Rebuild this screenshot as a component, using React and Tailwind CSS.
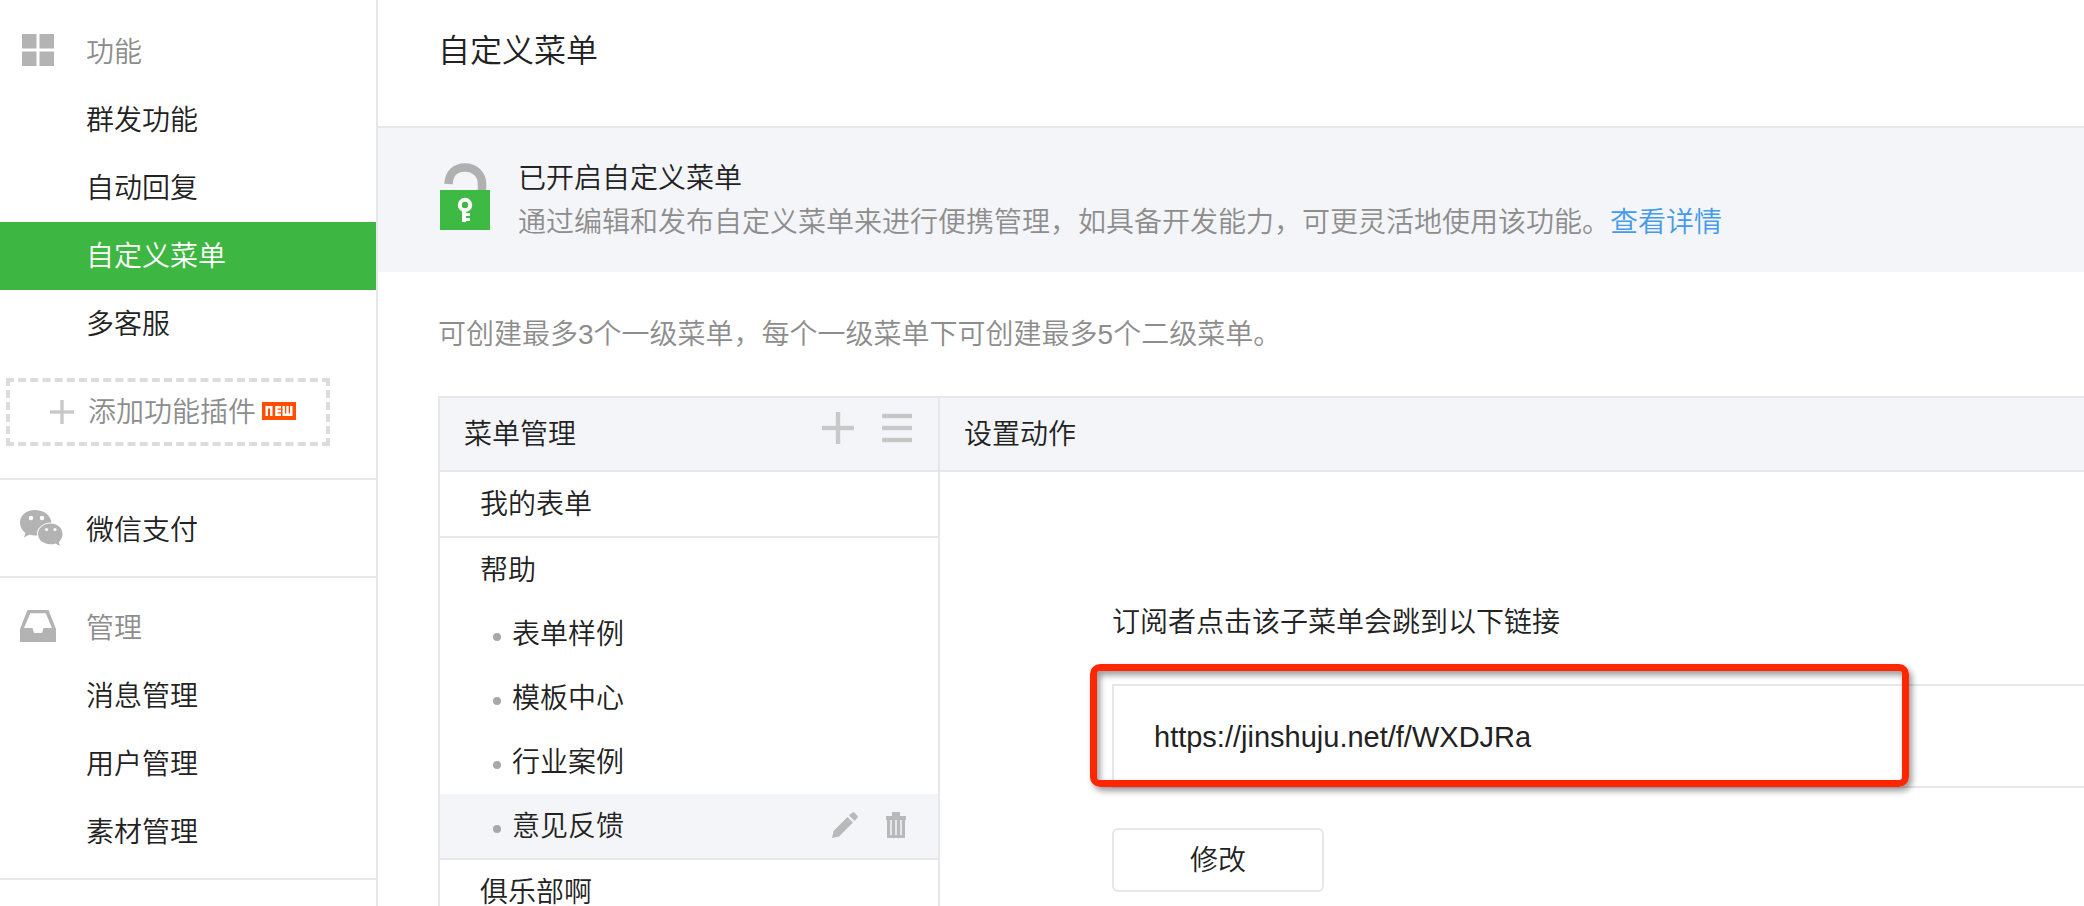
import React from "react";

const sideLink = "flex h-[68px] items-center pt-0.5 pl-[86px]";

function GridIcon() {
  return (
    <svg width="34" height="34" viewBox="0 0 34 34" fill="#b3b3b3" aria-hidden="true">
      <rect x="1" y="1" width="14.500" height="14.500" />
      <rect x="18.500" y="1" width="14.500" height="14.500" />
      <rect x="1" y="18.500" width="14.500" height="14.500" />
      <rect x="18.500" y="18.500" width="14.500" height="14.500" />
    </svg>
  );
}

function ChatIcon() {
  return (
    <svg width="44" height="38" viewBox="0 0 44 38" aria-hidden="true">
      <path
        fill="#b3b3b3"
        d="M15 1C6 1 0 6.500 0 13.500c0 4.500 2.200 8 5.500 10.500L4 28.500l5.500-3c2 .7 4 1 6.500 1h1c-1-7 5.500-13 14.500-13C30.500 6 24 1 15 1z"
      />
      <path
        fill="#b3b3b3"
        d="M30.500 14.500C23.500 14.500 18 19 18 25s5.500 10.300 12.500 10.300c1.800 0 3.400-.3 5-.9l4.500 2.700-1.200-4.200c2.400-2 3.700-4.900 3.700-7.900 0-6-5-10.500-12-10.500z"
      />
      <g fill="#fff">
        <circle cx="11" cy="9" r="2.200" />
        <circle cx="22" cy="9" r="2.200" />
        <circle cx="26.500" cy="20.500" r="1.600" />
        <circle cx="35" cy="20.500" r="1.600" />
      </g>
    </svg>
  );
}

function TrayIcon() {
  return (
    <svg width="36" height="34" viewBox="0 0 36 34" aria-hidden="true">
      <path
        fill="#b3b3b3"
        fillRule="evenodd"
        d="M7.500 1h21L36 20v13H0V20L7.500 1zm2.800 3.200L4 19h8.500l1.500 5h8l1.500-5H32L25.700 4.200H10.300z"
      />
    </svg>
  );
}

function PlusIcon({ size }) {
  return (
    <svg width={size} height={size} viewBox="0 0 32 32" fill="#c8c8c8" aria-hidden="true">
      <rect x="13.800" y="0" width="4.400" height="32" />
      <rect x="0" y="13.800" width="32" height="4.400" />
    </svg>
  );
}

function ListIcon() {
  return (
    <svg width="30" height="32" viewBox="0 0 30 32" fill="#c8c8c8" aria-hidden="true">
      <rect x="0" y="1.800" width="30" height="4.400" />
      <rect x="0" y="13.800" width="30" height="4.400" />
      <rect x="0" y="25.800" width="30" height="4.400" />
    </svg>
  );
}

function LockIcon() {
  return (
    <svg width="50" height="68" viewBox="0 0 50 68" aria-hidden="true">
      <path d="M8.500 21C9 10.500 15.500 4.500 25 4.500S42 11 42 21v7" fill="none" stroke="#b0b0b0" strokeWidth="8.500" />
      <rect x="0" y="27" width="50" height="40" fill="#3eb944" />
      <circle cx="25" cy="42" r="5.200" fill="none" stroke="#fff" strokeWidth="4" />
      <path d="M22 47h4v3h4v3h-4v2h4v3h-4v1h-4z" fill="#fff" />
    </svg>
  );
}

function PencilIcon() {
  return (
    <svg width="26" height="26" viewBox="0 0 26 26" fill="#b9b9b9" aria-hidden="true">
      <path d="M0 26l1.500-7L15.500 5l5.500 5.500L7 24.500z" />
      <path d="M17 3.500L20 .8c.8-.8 1.700-.8 2.500 0l2.700 2.700c.8.8.8 1.700 0 2.500L22.500 9z" />
    </svg>
  );
}

function TrashIcon() {
  return (
    <svg width="20" height="26" viewBox="0 0 20 26" aria-hidden="true">
      <path fill="#b9b9b9" d="M6 0h8v4h6v4h-1v18H1V8H0V4h6z" />
      <g fill="#e6e7ea">
        <rect x="4" y="8" width="2" height="15" />
        <rect x="9" y="8" width="2" height="15" />
        <rect x="14" y="8" width="2" height="15" />
      </g>
    </svg>
  );
}

function NewBadge() {
  return (
    <svg className="mb-1 ml-[6px]" width="34" height="18" viewBox="0 0 34 18" role="img" aria-label="new">
      <rect width="34" height="18" fill="#ff4e00" />
      <g fill="none" stroke="#fff" strokeWidth="2.400">
        <path d="M4.700 14V5.200H9.300V14" />
        <path d="M19 5.200h-4.600v7.600H19M14.400 9H19" />
        <path d="M21.700 4v8.800h7.600V4M25.500 4v8.800" />
      </g>
    </svg>
  );
}

function Sidebar() {
  return (
    <nav className="w-[378px] shrink-0 border-r-2 border-[#e7e7eb]">
      <section className="border-b-2 border-[#e7e7eb] pt-[18px] pb-8">
        <h2 className="flex h-[68px] items-center pt-0.5 text-[#8d8d8d]">
          <span className="w-[86px] pb-1.5 pl-[21px]"><GridIcon /></span>
          功能
        </h2>
        <a href="#mass" className={sideLink}>群发功能</a>
        <a href="#reply" className={sideLink}>自动回复</a>
        <a href="#menu" aria-current="page" className={sideLink + " bg-[#3eb642] text-white"}>自定义菜单</a>
        <a href="#service" className={sideLink}>多客服</a>
        <a
          href="#plugins"
          className="mt-5 ml-[6px] flex h-[68px] w-[324px] items-center border-4 border-dashed border-[#dcdcdc] pt-0.5 pl-10 text-[#8d8d8d]"
        >
          <span className="w-[38px] pb-0.5"><PlusIcon size={24} /></span>
          添加功能插件
          <NewBadge />
        </a>
      </section>
      <section className="border-b-2 border-[#e7e7eb] pt-4 pb-3">
        <a href="#pay" className="flex h-[68px] items-center pt-0.5">
          <span className="w-[86px] pb-1.5 pl-5"><ChatIcon /></span>
          微信支付
        </a>
      </section>
      <section className="border-b-2 border-[#e7e7eb] pt-4 pb-3">
        <h2 className="flex h-[68px] items-center pt-0.5 text-[#8d8d8d]">
          <span className="w-[86px] pb-1.5 pl-5"><TrayIcon /></span>
          管理
        </h2>
        <a href="#messages" className={sideLink}>消息管理</a>
        <a href="#users" className={sideLink}>用户管理</a>
        <a href="#assets" className={sideLink}>素材管理</a>
      </section>
    </nav>
  );
}

function SubItem({ label, active }) {
  return (
    <li className={"flex h-16 items-center pt-0.5 pr-8 pl-[53px] " + (active ? "bg-[#f4f5f9]" : "")}>
      <span className="mt-1 mr-[11px] size-2 rounded-full bg-[#a8a8a8]" />
      <a href={"#" + label} className="grow">{label}</a>
      {active && (
        <span className="flex gap-7 pb-1">
          <button type="button" aria-label="编辑"><PencilIcon /></button>
          <button type="button" aria-label="删除"><TrashIcon /></button>
        </span>
      )}
    </li>
  );
}

function MenuPanel() {
  return (
    <section className="w-[502px] shrink-0 border-x-2 border-[#e7e7eb]">
      <header className="flex h-[74px] items-center justify-between border-b-2 border-[#e7e7eb] bg-[#f4f5f9] pt-0.5 pr-[26px] pl-6">
        <h2>菜单管理</h2>
        <div className="mb-3.5 flex gap-7">
          <button type="button" aria-label="添加菜单"><PlusIcon size={32} /></button>
          <button type="button" aria-label="菜单排序"><ListIcon /></button>
        </div>
      </header>
      <a href="#forms" className="flex h-[66px] items-center border-b-2 border-[#e7e7eb] pt-0.5 pl-10">我的表单</a>
      <div className="border-b-2 border-[#e7e7eb]">
        <a href="#help" className="flex h-16 items-center pt-0.5 pl-10">帮助</a>
        <ul>
          <SubItem label="表单样例" />
          <SubItem label="模板中心" />
          <SubItem label="行业案例" />
          <SubItem label="意见反馈" active />
        </ul>
      </div>
      <a href="#club" className="flex h-16 items-center pt-0.5 pl-10">俱乐部啊</a>
    </section>
  );
}

function ActionPanel() {
  return (
    <section className="min-w-0 grow">
      <h2 className="flex h-[74px] items-center border-b-2 border-[#e7e7eb] bg-[#f4f5f9] pt-0.5 pl-6">设置动作</h2>
      <div className="pt-[129px] pl-[172px]">
        <label htmlFor="link" className="block leading-[44px]">订阅者点击该子菜单会跳到以下链接</label>
        <div className="relative mt-[39px]">
          <input
            id="link"
            type="text"
            readOnly
            value="https://jinshuju.net/f/WXDJRa"
            className="block h-[104px] w-full border-y-2 border-l-2 border-[#e7e7eb] bg-white pt-0.5 pl-10 text-[29px] font-normal outline-none"
          />
          <div className="pointer-events-none absolute -top-5 -left-[22px] h-[123px] w-[819px] rounded-[10px] border-7 border-[#ff2600] shadow-[3px_4px_6px_rgba(0,0,0,0.4),inset_3px_4px_6px_rgba(0,0,0,0.4)]" />
        </div>
        <button type="button" className="mt-10 h-16 w-[212px] rounded-md border-2 border-[#e7e7eb] bg-white pt-0.5">修改</button>
      </div>
    </section>
  );
}

export default function App() {
  return (
    <div className="flex h-screen overflow-hidden bg-white font-['Liberation_Sans','Noto_Sans_CJK_SC',sans-serif] text-[28px] leading-[44px] font-[350] text-[#222]">
      <Sidebar />
      <main className="min-w-0 grow">
        <header className="flex h-32 items-start border-b-2 border-[#e7e7eb] pt-[29px] pl-[60px]">
          <h1 className="text-[32px] leading-[44px]">自定义菜单</h1>
        </header>
        <div className="flex h-36 items-start bg-[#f4f5f9] pt-[29px] pl-[62px]">
          <span className="mt-1.5 mr-7"><LockIcon /></span>
          <div>
            <p>已开启自定义菜单</p>
            <p className="text-[#8d8d8d]">
              通过编辑和发布自定义菜单来进行便携管理，如具备开发能力，可更灵活地使用该功能。
              <a href="#detail" className="text-[#459ae9]">查看详情</a>
            </p>
          </div>
        </div>
        <div className="pt-[41px] pl-[60px]">
          <p className="text-[#8d8d8d]">可创建最多3个一级菜单，每个一级菜单下可创建最多5个二级菜单。</p>
          <div className="mt-[39px] flex border-t-2 border-[#e7e7eb]">
            <MenuPanel />
            <ActionPanel />
          </div>
        </div>
      </main>
    </div>
  );
}
